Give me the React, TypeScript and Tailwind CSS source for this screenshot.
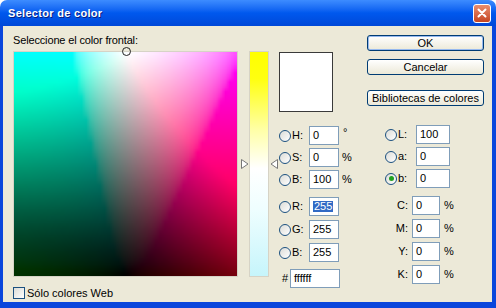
import React from "react";

function labToRgb(L: number, a: number, b: number): [number, number, number] {
  const fy = (L + 16) / 116;
  const fx = fy + a / 500;
  const fz = fy - b / 200;
  const d = 6 / 29;
  const f = (t: number) => (t > d ? t * t * t : 3 * d * d * (t - 4 / 29));
  const X = 0.96422 * f(fx);
  const Y = f(fy);
  const Z = 0.82521 * f(fz);
  const r = 3.1338561 * X - 1.6168667 * Y - 0.4906146 * Z;
  const g = -0.9787684 * X + 1.9161415 * Y + 0.033454 * Z;
  const bb = 0.0719453 * X - 0.2289914 * Y + 1.4052427 * Z;
  const gam = (c: number) => {
    c = Math.min(1, Math.max(0, c));
    return c <= 0.0031308 ? 12.92 * c : 1.055 * Math.pow(c, 1 / 2.4) - 0.055;
  };
  return [gam(r) * 255, gam(g) * 255, gam(bb) * 255];
}

const drawField = (c: HTMLCanvasElement | null) => {
  if (!c) return;
  const ctx = c.getContext("2d");
  if (!ctx) return;
  const w = c.width;
  const h = c.height;
  const img = ctx.createImageData(w, h);
  for (let y = 0; y < h; y++) {
    const L = 100 * (1 - y / (h - 1));
    for (let x = 0; x < w; x++) {
      const a = -128 + (255 * x) / (w - 1);
      const [r, g, b] = labToRgb(L, a, 0);
      const i = (y * w + x) * 4;
      img.data[i] = r;
      img.data[i + 1] = g;
      img.data[i + 2] = b;
      img.data[i + 3] = 255;
    }
  }
  ctx.putImageData(img, 0, 0);
};

function Radio({ checked = false }: { checked?: boolean }) {
  return (
    <span className="w-[12px] h-[12px] rounded-full border border-[#1c5180] bg-gradient-to-br from-[#dcdcd7] to-white flex items-center justify-center shrink-0">
      {checked && <span className="w-[5px] h-[5px] rounded-full bg-[#21a121]" />}
    </span>
  );
}

function Field({ value, w, selected = false }: { value: string; w: string; selected?: boolean }) {
  return (
    <div className={`${w} h-[19px] border border-[#7f9db9] bg-white flex items-center pl-[3px] leading-none`}>
      {selected ? <span className="bg-[#316ac5] text-white px-[1px]">{value}</span> : <span>{value}</span>}
    </div>
  );
}

function XpButton({ children, def = false }: { children: React.ReactNode; def?: boolean }) {
  return (
    <div
      className={`h-[16px] w-[117px] rounded-[3px] border border-[#003c74] bg-gradient-to-b from-white to-[#ece9d8] flex items-center justify-center leading-none ${
        def ? "shadow-[inset_0_0_0_1px_#96b9ef]" : ""
      }`}
    >
      {children}
    </div>
  );
}

export default function App() {
  return (
    <div className="w-[496px] h-[308px] flex flex-col font-['Liberation_Sans',Arial,sans-serif] text-[11px] text-black bg-white">
      {/* Title bar */}
      <div className="h-[26px] rounded-t-[7px] bg-gradient-to-b from-[#3d8cff] via-[#0058ee] to-[#0048d8] flex items-center justify-between pl-[8px] pr-[5px] shrink-0">
        <span className="text-white font-bold text-[11px] tracking-[0.3px] [text-shadow:1px_1px_0_#0a1f80]">Selector de color</span>
        <div className="w-[18px] h-[19px] rounded-[3px] border border-white bg-gradient-to-b from-[#e98d6e] to-[#c4431f] flex items-center justify-center">
          <svg width="10" height="10" viewBox="0 0 10 10">
            <path d="M1.5 1.5 L8.5 8.5 M8.5 1.5 L1.5 8.5" stroke="white" strokeWidth="2" strokeLinecap="round" />
          </svg>
        </div>
      </div>

      {/* Body */}
      <div className="flex-1 flex bg-[#ece9d8] border-l-[3px] border-r-[4px] border-b-[6px] border-[#0a46dc] pl-[10px] pt-[7px]">
        {/* Column 1 */}
        <div className="w-[225px] flex flex-col">
          <div className="h-[14px] leading-[14px] tracking-[-0.15px]">Seleccione el color frontal:</div>
          <div className="relative mt-[4px] w-[225px] h-[226px] border border-[#d6d3c6]">
            <canvas ref={drawField} width={48} height={48} className="block w-[223px] h-[224px]" />
            <span className="absolute left-[108px] top-[-5px] w-[9px] h-[9px] rounded-full border border-[#222]" />
          </div>
          <div className="mt-[10px] flex items-center gap-[2px] h-[12px]">
            <span className="w-[12px] h-[12px] border border-[#1c5180] bg-gradient-to-br from-[#dcdcd7] to-white" />
            <span className="leading-none">Sólo colores Web</span>
          </div>
        </div>

        {/* Slider */}
        <div className="relative ml-[3px] mt-[18px] w-[36px] h-[226px]">
          <svg className="absolute left-0 top-[108px]" width="8" height="10" viewBox="0 0 8 10">
            <path d="M0.5 0.5 L7 5 L0.5 9.5 Z" fill="white" stroke="#777" strokeWidth="1" />
          </svg>
          <div className="absolute left-[8px] top-0 w-[20px] h-[226px] border border-[#d6d3c6] bg-[linear-gradient(to_bottom,#ffff00_0%,#ffff10_12%,#ffffa8_35%,#ffffff_52%,#effeff_70%,#c6f5fb_100%)]" />
          <svg className="absolute left-[29px] top-[108px]" width="8" height="10" viewBox="0 0 8 10">
            <path d="M7.5 0.5 L1 5 L7.5 9.5 Z" fill="white" stroke="#777" strokeWidth="1" />
          </svg>
        </div>

        {/* Column 3 */}
        <div className="ml-[2px] w-[88px] flex flex-col">
          <div className="mt-[19px] w-[54px] h-[60px] border border-[#3a3a3a] bg-white" />
          <div className="mt-[14px] flex items-center h-[19px]">
            <Radio />
            <span className="ml-[1px] w-[17px]">H:</span>
            <Field value="0" w="w-[30px]" />
            <span className="ml-[4px] -mt-[6px]">°</span>
          </div>
          <div className="mt-[3px] flex items-center h-[19px]">
            <Radio />
            <span className="ml-[1px] w-[17px]">S:</span>
            <Field value="0" w="w-[30px]" />
            <span className="ml-[3px]">%</span>
          </div>
          <div className="mt-[3px] flex items-center h-[19px]">
            <Radio />
            <span className="ml-[1px] w-[17px]">B:</span>
            <Field value="100" w="w-[30px]" />
            <span className="ml-[3px]">%</span>
          </div>
          <div className="mt-[8px] flex items-center h-[19px]">
            <Radio />
            <span className="ml-[1px] w-[17px]">R:</span>
            <Field value="255" w="w-[30px]" selected />
          </div>
          <div className="mt-[4px] flex items-center h-[19px]">
            <Radio />
            <span className="ml-[1px] w-[17px]">G:</span>
            <Field value="255" w="w-[30px]" />
          </div>
          <div className="mt-[4px] flex items-center h-[19px]">
            <Radio />
            <span className="ml-[1px] w-[17px]">B:</span>
            <Field value="255" w="w-[30px]" />
          </div>
          <div className="mt-[7px] flex items-center h-[19px]">
            <span className="ml-[3px] w-[8px]">#</span>
            <Field value="ffffff" w="w-[50px]" />
          </div>
        </div>

        {/* Column 4 */}
        <div className="w-[117px] flex flex-col">
          <div className="mt-[2px]">
            <XpButton def>OK</XpButton>
          </div>
          <div className="mt-[8px]">
            <XpButton>Cancelar</XpButton>
          </div>
          <div className="mt-[15px]">
            <XpButton>Bibliotecas de colores</XpButton>
          </div>
          <div className="mt-[19px] flex items-center h-[19px] pl-[18px]">
            <Radio />
            <span className="ml-[1px] w-[18px]">L:</span>
            <Field value="100" w="w-[34px]" />
          </div>
          <div className="mt-[3px] flex items-center h-[19px] pl-[18px]">
            <Radio />
            <span className="ml-[1px] w-[18px]">a:</span>
            <Field value="0" w="w-[34px]" />
          </div>
          <div className="mt-[3px] flex items-center h-[19px] pl-[18px]">
            <Radio checked />
            <span className="ml-[1px] w-[18px]">b:</span>
            <Field value="0" w="w-[34px]" />
          </div>
          {[
            ["C:", "mt-[8px]"],
            ["M:", "mt-[4px]"],
            ["Y:", "mt-[4px]"],
            ["K:", "mt-[4px]"],
          ].map(([l, m]) => (
            <div key={l} className={`${m} flex items-center h-[19px]`}>
              <span className="w-[45px] text-right pr-[4px]">{l}</span>
              <Field value="0" w="w-[28px]" />
              <span className="ml-[4px]">%</span>
            </div>
          ))}
        </div>
      </div>
    </div>
  );
}
